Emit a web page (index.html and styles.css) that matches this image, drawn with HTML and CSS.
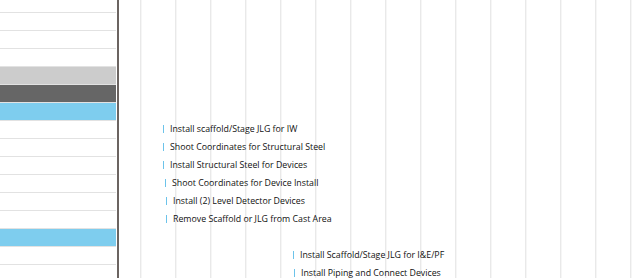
FILE: index.html
```html
<!DOCTYPE html>
<html lang="en">
  <head>
    <meta charset="UTF-8" />
    <meta name="viewport" content="width=device-width, initial-scale=1.0" />
    <title>Schedule</title>
    <link rel="stylesheet" href="styles.css">
  </head>
  <body>
    <div class="gantt">
      <div class="grid-pane">
        <div class="grid-row"></div>
        <div class="grid-row"></div>
        <div class="grid-row"></div>
        <div class="grid-row"></div>
        <div class="grid-row muted"></div>
        <div class="grid-row dark"></div>
        <div class="grid-row accent"></div>
        <div class="grid-row"></div>
        <div class="grid-row"></div>
        <div class="grid-row"></div>
        <div class="grid-row"></div>
        <div class="grid-row"></div>
        <div class="grid-row"></div>
        <div class="grid-row accent"></div>
        <div class="grid-row"></div>
        <div class="grid-row"></div>
      </div>
      <div class="splitter"></div>
      <div class="chart-pane">
        <div class="chart-row"></div>
        <div class="chart-row"></div>
        <div class="chart-row"></div>
        <div class="chart-row"></div>
        <div class="chart-row"></div>
        <div class="chart-row"></div>
        <div class="chart-row"></div>
        <div class="chart-row">
          <span class="task" style="margin-left: 44px"><i class="task-bar"></i>Install scaffold/Stage JLG for IW</span>
        </div>
        <div class="chart-row">
          <span class="task" style="margin-left: 44px"><i class="task-bar"></i>Shoot Coordinates for Structural Steel</span>
        </div>
        <div class="chart-row">
          <span class="task" style="margin-left: 44px"><i class="task-bar"></i>Install Structural Steel for Devices</span>
        </div>
        <div class="chart-row">
          <span class="task" style="margin-left: 46px"><i class="task-bar"></i>Shoot Coordinates for Device Install</span>
        </div>
        <div class="chart-row">
          <span class="task" style="margin-left: 47px"><i class="task-bar"></i>Install (2) Level Detector Devices</span>
        </div>
        <div class="chart-row">
          <span class="task" style="margin-left: 47px"><i class="task-bar"></i>Remove Scaffold or JLG from Cast Area</span>
        </div>
        <div class="chart-row"></div>
        <div class="chart-row">
          <span class="task" style="margin-left: 174px"><i class="task-bar"></i>Install Scaffold/Stage JLG for I&amp;E/PF</span>
        </div>
        <div class="chart-row">
          <span class="task" style="margin-left: 175px"><i class="task-bar"></i>Install Piping and Connect Devices</span>
        </div>
      </div>
    </div>
  </body>
</html>
```

FILE: styles.css
```css
* {
  margin: 0;
  padding: 0;
  box-sizing: border-box;
}
html,
body {
  height: 100%;
  overflow: hidden;
  background: #fff;
}
.gantt {
  display: flex;
  height: 283px;
  margin-top: -5px;
  overflow: hidden;
  font-family: "Open Sans", "Noto Sans", sans-serif;
  font-size: 8.8px;
  color: #111;
}
.grid-pane {
  width: 116px;
  margin-right: 1px;
  flex-shrink: 0;
}
.grid-row {
  height: 18px;
  border-bottom: 1px solid #e2e2e2;
}
.grid-row.muted {
  background: #cccccc;
}
.grid-row.dark {
  background: #666666;
}
.grid-row.accent {
  background: #7ecdee;
}
.splitter {
  width: 2px;
  flex-shrink: 0;
  background: #6b6461;
}
.chart-pane {
  flex: 1;
  background-image: linear-gradient(to right, #e9e9e9 0 1px, #f6f6f6 1px 2px, transparent 2px);
  background-size: 35px 100%;
  background-position: 21px 0;
}
.chart-row {
  height: 18px;
  display: flex;
  align-items: center;
  padding-bottom: 3px;
}
.task {
  display: flex;
  align-items: center;
  white-space: nowrap;
  line-height: 12px;
}
.task-bar {
  width: 1px;
  height: 8px;
  margin-right: 6px;
  background: #6cc3ea;
}
```
